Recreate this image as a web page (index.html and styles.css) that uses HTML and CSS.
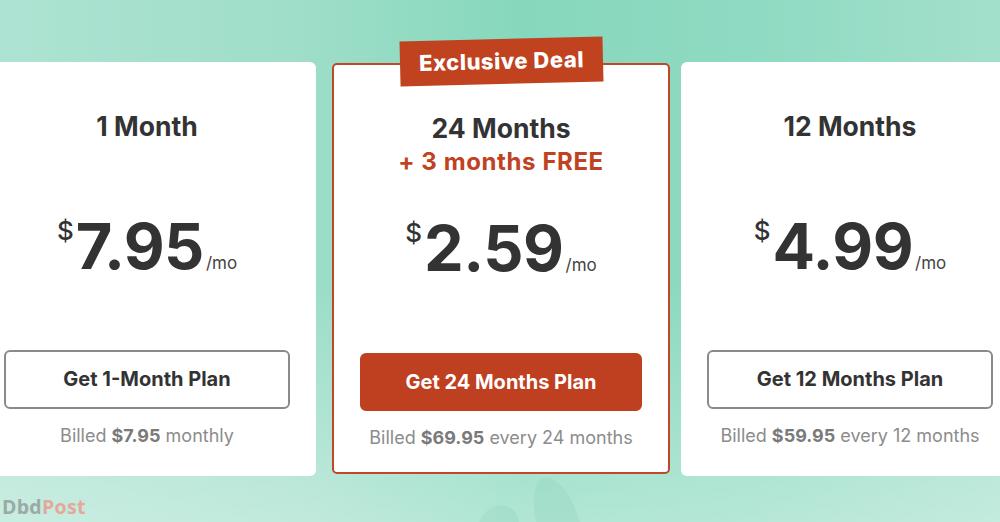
FILE: index.html
```html
<!DOCTYPE html>
<html lang="en">
<head>
<meta charset="utf-8">
<title>Pricing</title>
<link rel="stylesheet" href="styles.css">
</head>
<body>
<main class="page">
  <div class="leaf leaf-a"></div>
  <div class="leaf leaf-b"></div>
  <section class="plans">
    <article class="card">
      <div class="head">
        <h2 class="title">1 Month</h2>
      </div>
      <div class="price"><span class="cur">$</span><span class="amt">7.95</span><span class="per">/mo</span></div>
      <a class="btn btn-outline">Get 1-Month Plan</a>
      <p class="billed">Billed <b>$7.95</b> monthly</p>
    </article>
    <article class="card card-featured">
      <div class="badge">Exclusive Deal</div>
      <div class="head">
        <h2 class="title">24 Months</h2>
        <p class="bonus">+ 3 months FREE</p>
      </div>
      <div class="price"><span class="cur">$</span><span class="amt">2.59</span><span class="per">/mo</span></div>
      <a class="btn btn-solid">Get 24 Months Plan</a>
      <p class="billed">Billed <b>$69.95</b> every 24 months</p>
    </article>
    <article class="card">
      <div class="head">
        <h2 class="title">12 Months</h2>
      </div>
      <div class="price"><span class="cur">$</span><span class="amt">4.99</span><span class="per">/mo</span></div>
      <a class="btn btn-outline">Get 12 Months Plan</a>
      <p class="billed">Billed <b>$59.95</b> every 12 months</p>
    </article>
  </section>
  <div class="mark"><span class="mark-a">Dbd</span><span class="mark-b">Post</span></div>
</main>
</body>
</html>
```

FILE: styles.css
```css
* { box-sizing: border-box; }
html, body { margin: 0; padding: 0; }
body {
  width: 1000px;
  height: 522px;
  overflow: hidden;
  font-family: Inter, "Liberation Sans", sans-serif;
  color: #333;
}
.page {
  position: relative;
  width: 1000px;
  height: 522px;
  overflow: hidden;
  background:
    linear-gradient(to bottom, rgba(255,255,255,0) 0%, rgba(255,255,255,0) 55%, rgba(255,255,255,0.35) 100%),
    linear-gradient(90deg, #ade3d2 0%, #9fdec9 30%, #86d8bd 52%, #8fdac2 75%, #a3e0cc 100%);
  padding-top: 62px;
}
.leaf {
  position: absolute;
  background: rgba(120, 200, 170, 0.18);
  border-radius: 50% 50% 50% 50% / 60% 60% 40% 40%;
}
.leaf-a { left: 535px; top: 476px; width: 42px; height: 80px; transform: rotate(-18deg); }
.leaf-b { left: 480px; top: 505px; width: 40px; height: 40px; transform: rotate(30deg); }
.plans {
  display: flex;
  gap: 14px;
  margin-left: -22px;
  align-items: flex-start;
}
.card {
  position: relative;
  flex: 0 0 338px;
  height: 414px;
  background: #fff;
  border-radius: 6px;
  padding: 48px 26px 0;
  display: flex;
  flex-direction: column;
  align-items: stretch;
  text-align: center;
}
.card-featured {
  border: 2px solid #c2472a;
  border-radius: 5px;
  margin: 1px -3px 0 2px;
  height: 411px;
  padding: 47px 26px 0;
}
.badge {
  position: absolute;
  left: 66px;
  top: -26px;
  width: 203px;
  height: 45px;
  background: #c0421f;
  color: #fff;
  font-weight: 800;
  font-size: 22px;
  letter-spacing: 0.5px;
  line-height: 45px;
  text-align: center;
  transform: rotate(-1.4deg);
}
.head {
  height: 72px;
}
.title {
  margin: 0;
  font-size: 26.5px;
  line-height: 32px;
  font-weight: 700;
  color: #333;
}
.bonus {
  margin: 2px 0 0;
  font-size: 24px;
  letter-spacing: 0.6px;
  line-height: 32px;
  font-weight: 700;
  color: #c0421f;
}
.price {
  margin-top: 29px;
  height: 70px;
  display: flex;
  justify-content: center;
  align-items: baseline;
  color: #333;
}
.cur {
  align-self: flex-start;
  font-size: 26px;
  font-weight: 500;
  line-height: 1;
  margin-top: 7px;
  margin-right: 2px;
}
.amt {
  font-size: 63px;
  font-weight: 700;
  line-height: 70px;
  letter-spacing: -0.5px;
}
.per {
  font-size: 17px;
  font-weight: 400;
  margin-left: 2px;
  color: #444;
}
.btn {
  display: block;
  margin-top: 69px;
  height: 59px;
  border-radius: 6px;
  font-size: 20px;
  font-weight: 700;
  line-height: 55px;
  text-align: center;
}
.btn-outline {
  border: 2px solid #8a8a8a;
  color: #333;
  background: #fff;
}
.btn-solid {
  border: 2px solid #bf4020;
  background: #bf4020;
  color: #fff;
  height: 58px;
  margin-top: 70px;
}
.billed {
  margin: 17px 0 0;
  font-size: 18px;
  line-height: 20px;
  color: #8c8c8c;
}
.billed b {
  color: #7a7a7a;
  font-weight: 700;
}
.mark {
  position: absolute;
  left: 2px;
  top: 495px;
  font-family: "Open Sans", "Liberation Sans", sans-serif;
  font-weight: 700;
  font-size: 19.5px;
  line-height: 24px;
  letter-spacing: 0.3px;
}
.mark-a { color: #9aaaa4; }
.mark-b { color: #e3a99b; }
```
